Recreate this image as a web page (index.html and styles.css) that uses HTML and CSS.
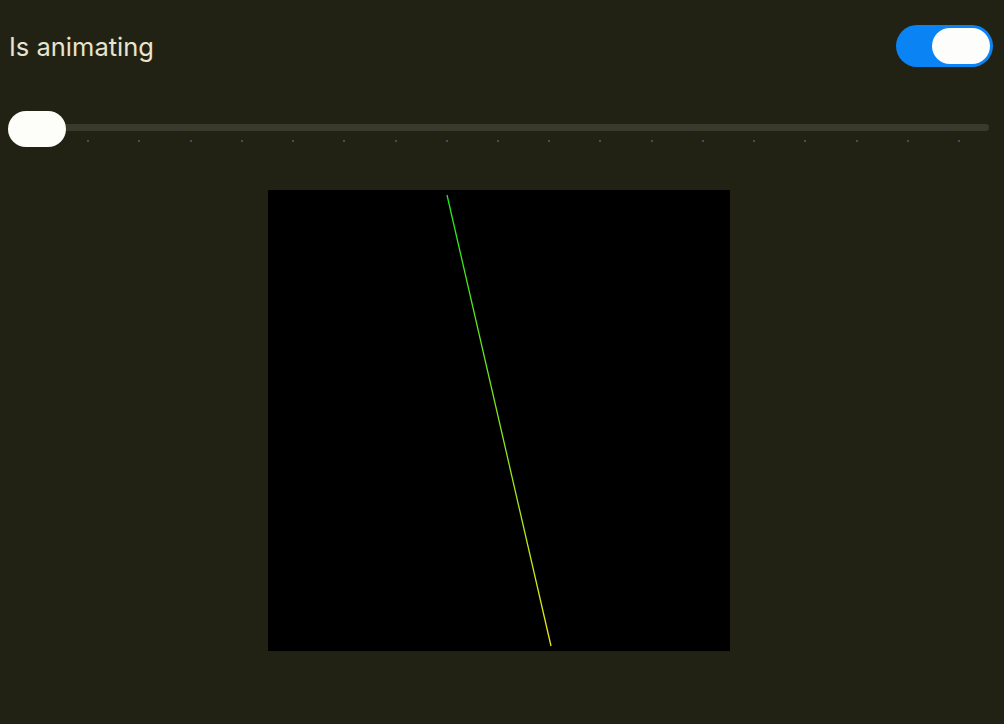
FILE: index.html
```html
<!DOCTYPE html>
<html>
<head>
<meta charset="utf-8">
<link rel="stylesheet" href="styles.css">
</head>
<body>
<div class="page">
  <div class="header">
    <span class="label">Is animating</span>
    <div class="toggle"><div class="toggle-thumb"></div></div>
  </div>
  <div class="slider">
    <div class="track">
      <div class="ticks">
        <i></i><i></i><i></i><i></i><i></i><i></i><i></i><i></i><i></i><i></i><i></i><i></i><i></i><i></i><i></i><i></i><i></i><i></i><i></i>
      </div>
    </div>
    <div class="slider-thumb"></div>
  </div>
  <div class="canvas-wrap">
    <svg class="canvas" width="462" height="461" viewBox="0 0 462 461">
      <defs>
        <linearGradient id="g" x1="0" y1="0" x2="0" y2="1" gradientUnits="objectBoundingBox">
          <stop offset="0" stop-color="#1fe81f"/>
          <stop offset="1" stop-color="#e8e81a"/>
        </linearGradient>
      </defs>
      <rect width="462" height="461" fill="#000"/>
      <line x1="179" y1="5" x2="283" y2="456" stroke="url(#g)" stroke-width="1.3"/>
    </svg>
  </div>
</div>
</body>
</html>
```
FILE: styles.css
```css
html, body {
  margin: 0;
  padding: 0;
  background: #222214;
}
body {
  width: 1004px;
  height: 724px;
  overflow: hidden;
  font-family: Inter, "Liberation Sans", sans-serif;
}
.page {
  display: flex;
  flex-direction: column;
  padding: 0 11px 0 8px;
}
.header {
  height: 92px;
  display: flex;
  align-items: center;
  justify-content: space-between;
}
.label {
  color: #e8e4ce;
  font-size: 25.5px;
  padding-left: 1px;
}
.toggle {
  width: 97px;
  height: 42px;
  border-radius: 21px;
  background: #0a84f5;
  display: flex;
  align-items: center;
  justify-content: flex-end;
  padding-right: 3px;
  box-sizing: border-box;
}
.toggle-thumb {
  width: 58px;
  height: 36px;
  border-radius: 18px;
  background: #fdfdfb;
}
.slider {
  margin-top: 19px;
  height: 36px;
  position: relative;
}
.track {
  position: absolute;
  left: 0;
  right: 4px;
  top: 13px;
  height: 7px;
  border-radius: 4px;
  background: #3a3a2c;
}
.ticks {
  position: absolute;
  left: 28px;
  right: 29px;
  top: 16px;
  display: flex;
  justify-content: space-between;
}
.ticks i {
  display: block;
  width: 2px;
  height: 2px;
  background: #4a4a5e;
}
.slider-thumb {
  position: absolute;
  left: 0;
  top: 0;
  width: 58px;
  height: 36px;
  border-radius: 18px;
  background: #fdfdfa;
}
.canvas-wrap {
  margin-top: 43px;
  display: flex;
  padding-left: 260px;
}
.canvas {
  display: block;
}
```
